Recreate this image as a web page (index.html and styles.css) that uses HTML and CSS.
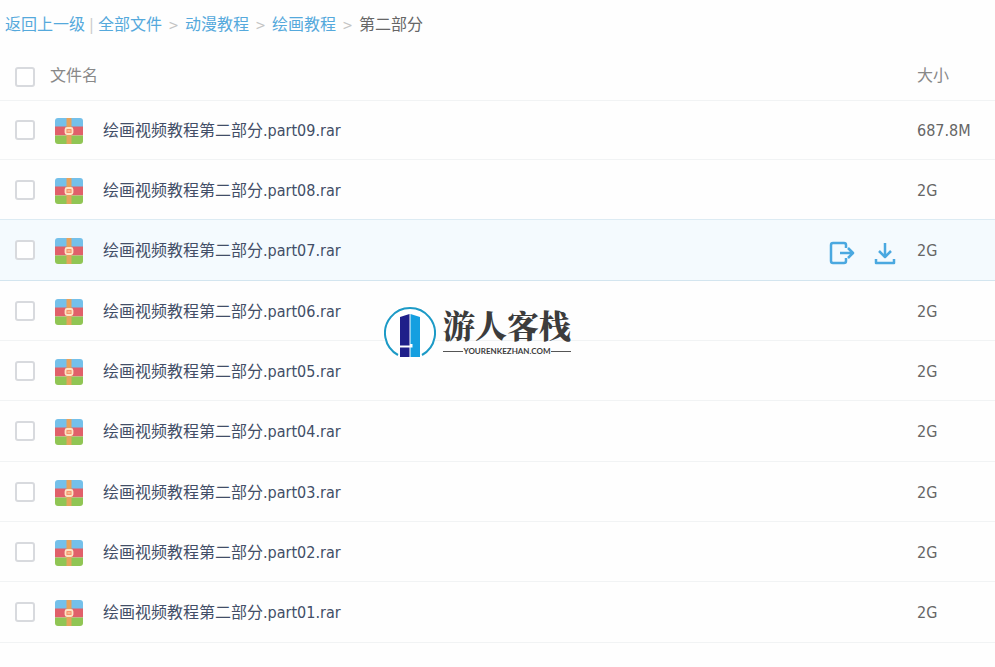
FILE: index.html
```html
<!DOCTYPE html>
<html lang="zh-CN">
<head>
    <meta charset="UTF-8">
    <meta name="viewport" content="width=device-width, initial-scale=1">
    <title>第二部分</title>
    <link rel="stylesheet" href="styles.css">
</head>
<body>
    <!-- Shared archive icon -->
    <svg class="sprite" aria-hidden="true">
        <symbol id="rar" viewBox="0 0 28 26">
            <path d="M3 0H25A3 3 0 0 1 28 3V9H0V3A3 3 0 0 1 3 0Z" fill="#74c0ea"/>
            <path d="M0 8.500H28V17.500H0Z" fill="#e0606a"/>
            <path d="M0 17.500H28V23A3 3 0 0 1 25 26H3A3 3 0 0 1 0 23Z" fill="#90c554"/>
            <path d="M11.500 0H16.500V26H11.500Z" fill="#e5a35c"/>
            <rect x="10.500" y="10" width="7" height="6" rx="1.500" fill="#f5946c" stroke="#fde3c4" stroke-width="1.800"/>
            <path d="M12.500 13H15.500" stroke="#fbd0a8" stroke-width="1.200"/>
        </symbol>
    </svg>

    <nav class="breadcrumb">
        <a href="#">返回上一级</a>
        <span class="divider">|</span>
        <a href="#">全部文件</a>
        <span class="arrow">&gt;</span>
        <a href="#">动漫教程</a>
        <span class="arrow">&gt;</span>
        <a href="#">绘画教程</a>
        <span class="arrow">&gt;</span>
        <span class="current">第二部分</span>
    </nav>

    <table class="file-list">
        <thead>
            <tr>
                <th class="check"><input type="checkbox" id="all" aria-label="全选"></th>
                <th class="name"><label for="all">文件名</label></th>
                <th class="actions"></th>
                <th class="size">大小</th>
            </tr>
        </thead>
        <tbody>
            <tr>
                <td class="check"><input type="checkbox" id="f9"></td>
                <td class="name"><label for="f9"><svg class="icon"><use href="#rar"/></svg>绘画视频教程第二部分.part09.rar</label></td>
                <td class="actions"></td>
                <td class="size">687.8M</td>
            </tr>
            <tr>
                <td class="check"><input type="checkbox" id="f8"></td>
                <td class="name"><label for="f8"><svg class="icon"><use href="#rar"/></svg>绘画视频教程第二部分.part08.rar</label></td>
                <td class="actions"></td>
                <td class="size">2G</td>
            </tr>
            <tr class="active">
                <td class="check"><input type="checkbox" id="f7"></td>
                <td class="name"><label for="f7"><svg class="icon"><use href="#rar"/></svg>绘画视频教程第二部分.part07.rar</label></td>
                <td class="actions">
                    <div class="buttons">
                        <button type="button" aria-label="分享">
                            <svg viewBox="0 0 26 24">
                                <path d="M17 7V4Q17 2 15 2H4Q2 2 2 4V20Q2 22 4 22H15Q17 22 17 20V17M11 12H24M19 7L24 12L19 17"/>
                            </svg>
                        </button>
                        <button type="button" aria-label="下载">
                            <svg viewBox="0 0 26 24">
                                <path d="M13 2V16M7 10L13 16L19 10M4 18V22H22V18"/>
                            </svg>
                        </button>
                    </div>
                </td>
                <td class="size">2G</td>
            </tr>
            <tr>
                <td class="check"><input type="checkbox" id="f6"></td>
                <td class="name"><label for="f6"><svg class="icon"><use href="#rar"/></svg>绘画视频教程第二部分.part06.rar</label></td>
                <td class="actions"></td>
                <td class="size">2G</td>
            </tr>
            <tr>
                <td class="check"><input type="checkbox" id="f5"></td>
                <td class="name"><label for="f5"><svg class="icon"><use href="#rar"/></svg>绘画视频教程第二部分.part05.rar</label></td>
                <td class="actions"></td>
                <td class="size">2G</td>
            </tr>
            <tr>
                <td class="check"><input type="checkbox" id="f4"></td>
                <td class="name"><label for="f4"><svg class="icon"><use href="#rar"/></svg>绘画视频教程第二部分.part04.rar</label></td>
                <td class="actions"></td>
                <td class="size">2G</td>
            </tr>
            <tr>
                <td class="check"><input type="checkbox" id="f3"></td>
                <td class="name"><label for="f3"><svg class="icon"><use href="#rar"/></svg>绘画视频教程第二部分.part03.rar</label></td>
                <td class="actions"></td>
                <td class="size">2G</td>
            </tr>
            <tr>
                <td class="check"><input type="checkbox" id="f2"></td>
                <td class="name"><label for="f2"><svg class="icon"><use href="#rar"/></svg>绘画视频教程第二部分.part02.rar</label></td>
                <td class="actions"></td>
                <td class="size">2G</td>
            </tr>
            <tr>
                <td class="check"><input type="checkbox" id="f1"></td>
                <td class="name"><label for="f1"><svg class="icon"><use href="#rar"/></svg>绘画视频教程第二部分.part01.rar</label></td>
                <td class="actions"></td>
                <td class="size">2G</td>
            </tr>
        </tbody>
    </table>

    <!-- Watermark over the list -->
    <div class="watermark">
        <svg class="logo" viewBox="0 0 52 52" aria-hidden="true">
            <circle cx="26" cy="26" r="26" fill="#fff"/>
            <path d="M14 49A25 25 0 1 1 38 49" fill="none" stroke="#1c9ac6" stroke-width="2"/>
            <path d="M16 11L25.500 8V39.500H16Z" fill="#20208a"/>
            <path d="M16 41.500H25.500V51H16Z" fill="#20208a"/>
            <path d="M26.500 8L36 11V51H26.500V41.500H28.500V38H26.500Z" fill="#159fe0"/>
        </svg>
        <div class="brand">
            <span class="brand-name">游人客栈</span>
            <span class="brand-url">YOURENKEZHAN.COM</span>
        </div>
    </div>
</body>
</html>
```

FILE: styles.css
```css
body {
    position: relative;
    margin: 0;
    background: #fefefe;
    color: #666;
    font-family: "DejaVu Sans Condensed", "Noto Sans", "Noto Sans CJK SC", sans-serif;
    font-size: 16px;
    line-height: 24px;
}
.sprite {
    position: absolute;
    width: 0;
    height: 0;
}
.breadcrumb {
    display: flex;
    padding: 13px 5px 14px;
}
.breadcrumb a {
    color: #55a9dc;
    text-decoration: none;
}
.divider {
    width: 13px;
    text-align: center;
    color: #ccc;
}
.arrow {
    width: 23px;
    text-align: center;
    color: #c4c4c4;
    font-size: 14px;
}
.current {
    color: #666;
}
.file-list {
    width: 100%;
    border-collapse: separate;
    border-spacing: 0;
    table-layout: fixed;
}
.file-list th,
.file-list td {
    box-sizing: border-box;
    height: 60px;
    padding: 2px 0 0;
    border-bottom: 1px solid #f1f3f4;
    text-align: left;
    font-weight: normal;
}
.file-list th {
    height: 50px;
    padding: 0;
    color: #888;
}
.file-list tbody tr:first-child td {
    height: 59px;
}
/* every third row takes the spare pixel */
.file-list tbody tr:nth-child(3n) td {
    height: 61px;
}
.file-list .check {
    width: 50px;
    padding: 0 0 0 15px;
}
.file-list th.check {
    padding-top: 2px;
}
.file-list .actions {
    width: 88px;
}
.file-list td.actions {
    padding-top: 5px;
}
.file-list .size {
    width: 78px;
}
.file-list td.name {
    color: #424e67;
}
.name label {
    display: flex;
    align-items: center;
}
td.name label {
    padding-left: 5px;
}
.icon {
    width: 28px;
    height: 26px;
    margin-right: 20px;
}
input[type="checkbox"] {
    appearance: none;
    display: block;
    width: 20px;
    height: 20px;
    margin: 0;
    border: 2px solid #d8dade;
    border-radius: 3px;
    background: #fff;
}
input[type="checkbox"]:checked {
    background: #4aa8e0;
}
.file-list .active td {
    background: #f4fafe;
    border-bottom-color: #d3e5ef;
    box-shadow: 0 -1px #dcebf3;
}
.buttons {
    display: flex;
    gap: 17px;
}
.buttons button {
    width: 26px;
    height: 24px;
    padding: 0;
    border: none;
    background: none;
    cursor: pointer;
}
.buttons svg {
    display: block;
    width: 26px;
    height: 24px;
    fill: none;
    stroke: #4aa8e0;
    stroke-width: 2.5;
    stroke-linejoin: round;
}
.watermark {
    position: absolute;
    top: 306px;
    left: 384px;
    display: flex;
    gap: 7px;
}
.logo {
    width: 52px;
    height: 52px;
}
.brand {
    width: 128px;
    color: #3c3c3c;
}
.brand-name {
    display: block;
    margin-bottom: 4px;
    font-family: "Noto Serif CJK SC", "Noto Sans CJK SC", serif;
    font-size: 32px;
    font-weight: 900;
    line-height: 36px;
}
.brand-url {
    display: flex;
    align-items: center;
    gap: 1px;
    font-family: Lato, sans-serif;
    font-size: 8px;
    font-weight: 700;
    line-height: 10px;
}
.brand-url::before,
.brand-url::after {
    content: "";
    flex: 1;
    height: 1px;
    background: #555;
}
```
